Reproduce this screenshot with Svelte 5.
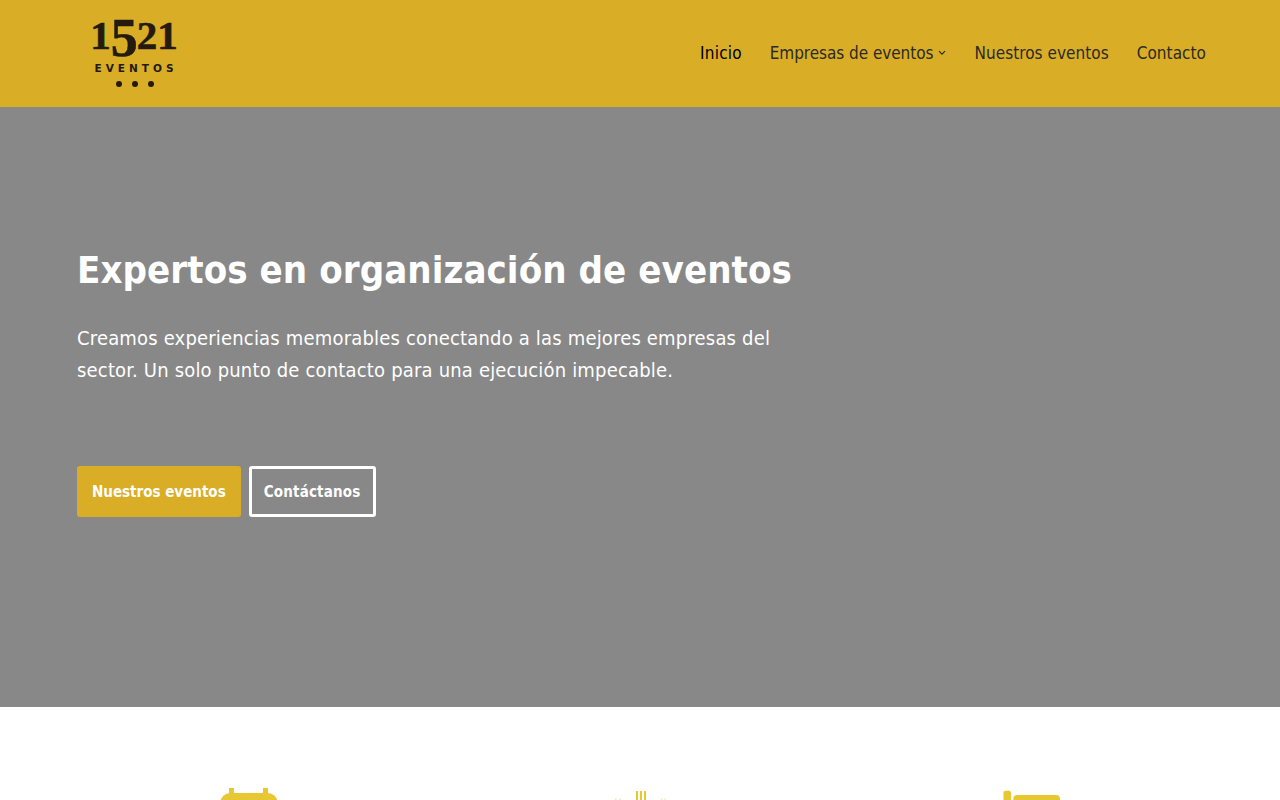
<script>
    const links = [
        { label: "Inicio", active: true },
        { label: "Empresas de eventos", caret: true },
        { label: "Nuestros eventos" },
        { label: "Contacto" },
    ];
</script>

<header>
    <a class="logo" href="#top">
        <span class="mark"><span>1</span><span class="five">5</span><span class="two">2</span><span>1</span></span>
        <span class="word">EVENTOS</span>
        <span class="dots"><i></i><i></i><i></i></span>
    </a>
    <nav>
        {#each links as link}
            <a href="#top" class:active={link.active} class:dropdown={link.caret}>
                {link.label}
                {#if link.caret}
                    <svg width="8" height="6" viewBox="0 0 8 6"><path d="M1 1.2 4 4.2 7 1.2" fill="none" stroke="currentColor" stroke-width="1.2" /></svg>
                {/if}
            </a>
        {/each}
    </nav>
</header>

<section class="hero">
    <h1>Expertos en organización de eventos</h1>
    <p>Creamos experiencias memorables conectando a las mejores empresas del sector. Un solo punto de contacto para una ejecución impecable.</p>
    <div class="buttons">
        <a class="btn primary" href="#top">Nuestros eventos</a>
        <a class="btn outline" href="#top">Contáctanos</a>
    </div>
</section>

<section class="features">
    <div class="feature">
        <svg width="60" height="60" viewBox="0 0 60 60" fill="none" stroke="#e8c832" stroke-width="7">
            <rect x="4.500" y="11.500" width="51" height="44" rx="7" />
            <path d="M12.500 3V14M46.500 3V14" stroke-width="5" />
        </svg>
    </div>
    <div class="feature">
        <svg width="60" height="60" viewBox="0 0 60 60" fill="none" stroke="#e8c832">
            <path d="M27 6V30M31 6V30M35 6V30" stroke-width="2" />
            <path d="M5.800 13.500V18M10 13.500V18M51.500 13.500V18M55 13.500V18" stroke-width="1.500" opacity="0.4" />
        </svg>
    </div>
    <div class="feature">
        <svg width="60" height="60" viewBox="0 0 60 60" fill="#e8c832">
            <rect x="2.500" y="5.700" width="7.500" height="50" rx="2" />
            <path d="M12.300 14a4 4 0 0 1 4-4h38.700a4 4 0 0 1 4 4v22H12.300z" />
        </svg>
    </div>
</section>

<style>
    :global(body) {
        font-family: "DejaVu Sans Condensed", "DejaVu Sans", sans-serif;
        font-stretch: condensed;
        background: #fff;
    }
    a {
        text-decoration: none;
        color: inherit;
    }
    header {
        height: 107px;
        background: #d9ad26;
        display: flex;
        justify-content: space-between;
        align-items: center;
        padding: 0 74px 0 90px;
    }
    .logo {
        width: 88px;
        display: flex;
        flex-direction: column;
        align-items: center;
        color: #231a10;
        margin-top: 1px;
    }
    .mark {
        font-family: "Liberation Serif", serif;
        font-weight: 700;
        font-size: 41px;
        line-height: 28px;
        height: 38px;
        display: flex;
        align-items: flex-start;
        -webkit-text-stroke: 0.6px #231a10;
    }
    .five {
        font-size: 54px;
        line-height: 32px;
        margin: 0.500px -1px 0 0;
    }
    .word {
        font-family: "DejaVu Sans", sans-serif;
        font-stretch: normal;
        font-size: 10.500px;
        letter-spacing: 4px;
        line-height: 12px;
        margin-top: 3px;
        margin-right: -4px;
        font-weight: 700;
        white-space: nowrap;
    }
    .dots {
        display: flex;
        gap: 10px;
        margin: 7px 0 0 2px;
    }
    .dots i {
        width: 6px;
        height: 6px;
        border-radius: 50%;
        background: #231a10;
    }
    nav {
        display: flex;
        gap: 28px;
        font-size: 17px;
        letter-spacing: 0.05px;
        color: #2b2a26;
        margin-top: -1px;
    }
    nav a {
        display: flex;
        align-items: center;
        gap: 5px;
    }
    nav .active {
        color: #000;
        letter-spacing: 0.2px;
    }
    nav .dropdown {
        letter-spacing: -0.05px;
    }
    .hero {
        height: 600px;
        box-sizing: border-box;
        background: #888;
        color: #fff;
        padding: 138px 0 0 77px;
    }
    h1 {
        margin: 0;
        font-size: 38px;
        line-height: 50px;
        font-weight: 700;
        letter-spacing: 0.06px;
    }
    p {
        margin: 27px 0 0;
        width: 720px;
        font-size: 20px;
        line-height: 32px;
        letter-spacing: 0.18px;
    }
    .buttons {
        display: flex;
        gap: 8px;
        margin-top: 80px;
    }
    .btn {
        height: 51px;
        box-sizing: border-box;
        display: flex;
        align-items: center;
        padding: 0 15px;
        border-radius: 3px;
        font-size: 15px;
        font-weight: 700;
    }
    .primary {
        background: #d9ad26;
    }
    .outline {
        border: 3px solid #fff;
        padding: 0 13px 0 12px;
        letter-spacing: 0.18px;
    }
    .features {
        display: grid;
        grid-template-columns: repeat(3, 391px);
        justify-content: center;
        padding-top: 78px;
    }
    .feature {
        display: flex;
        justify-content: center;
    }
</style>
